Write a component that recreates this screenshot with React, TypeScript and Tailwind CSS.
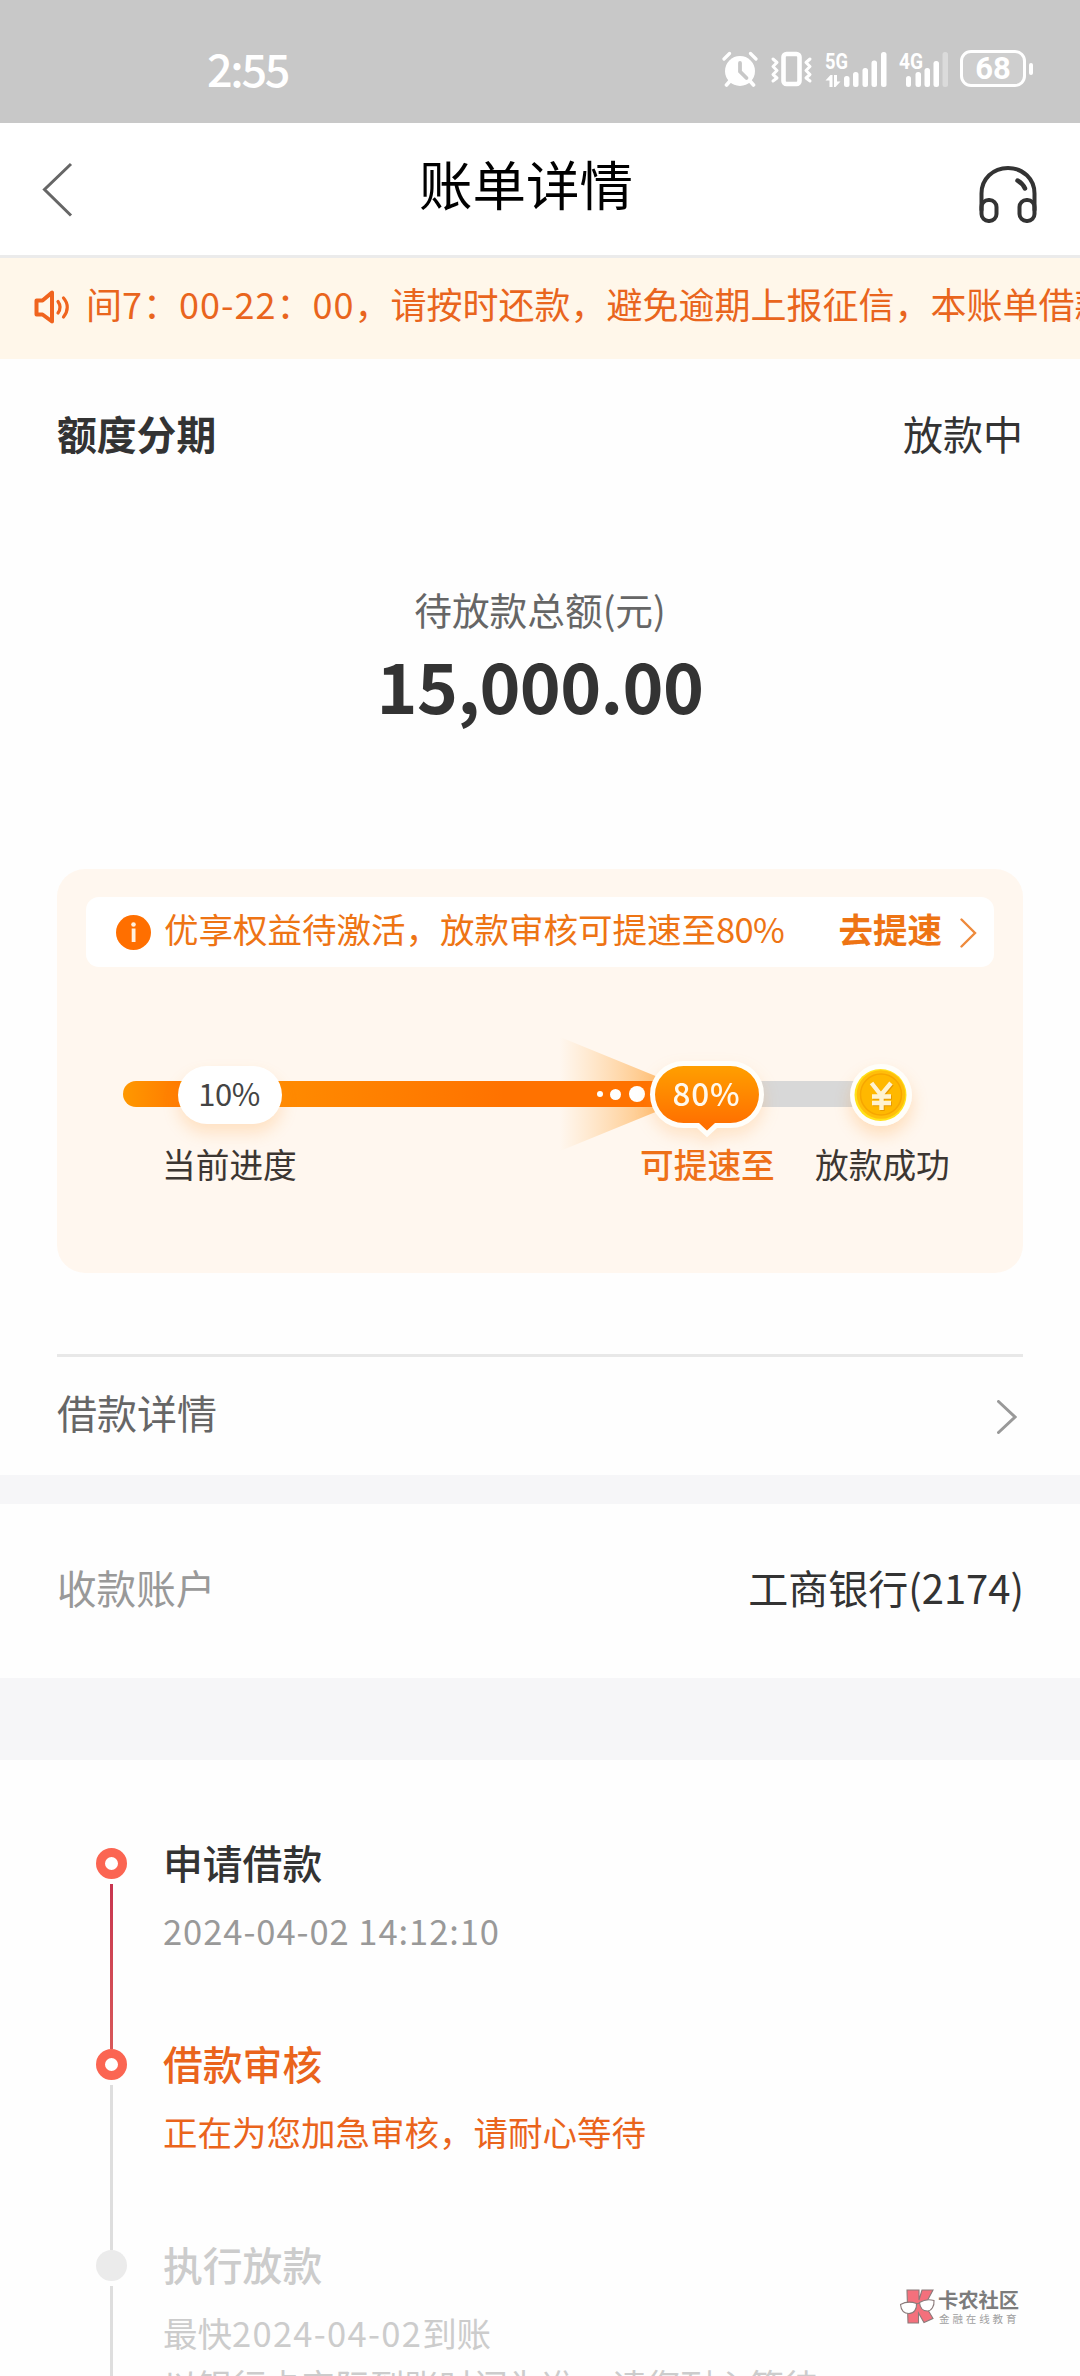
import React from "react";

function AlarmIcon() {
  return (
    <svg width="36" height="36" viewBox="0 0 36 36" fill="none" stroke="#fff" strokeLinecap="round">
      <circle cx="18" cy="20" r="15" fill="#fff" stroke="none" />
      <path d="M2 8L7.500 2.500M28.500 2.500L34 8" strokeWidth="3.200" />
      <path d="M8 30L4.500 34M28 30L31.500 34" strokeWidth="3.600" />
      <path d="M18 12V20.500L24.500 27" stroke="#c8c8c8" strokeWidth="3.800" />
    </svg>
  );
}

function VibrateIcon() {
  return (
    <svg width="44" height="36" viewBox="0 0 44 36" fill="none" stroke="#fff" strokeLinejoin="round" strokeLinecap="round">
      <rect x="13.500" y="3" width="16" height="30" rx="3" strokeWidth="4.600" />
      <path d="M3 8L7 11.500L3 15.500L7 19.500L3 23.500L7 27L3 30" strokeWidth="3" />
      <path d="M40 8L36 11.500L40 15.500L36 19.500L40 23.500L36 27L40 30" strokeWidth="3" />
    </svg>
  );
}

function SignalIcon({ label, weak }: { label: string; weak?: boolean }) {
  return weak ? (
    <svg width="52" height="38" viewBox="0 0 52 38" fill="#fff">
      <text x="0" y="17.500" fontFamily="Roboto" fontWeight="700" fontSize="22" textLength="24" lengthAdjust="spacingAndGlyphs">{label}</text>
      <rect x="7" y="25" width="5" height="11" rx="2.500" />
      <rect x="16.500" y="21" width="5.500" height="15" rx="2.500" />
      <rect x="25.500" y="17" width="5.500" height="19" rx="2.500" />
      <rect x="34.500" y="10" width="5.500" height="26" rx="2.500" />
      <rect x="43.500" y="1" width="5.500" height="35" rx="2.500" opacity="0.35" />
    </svg>
  ) : (
    <svg width="64" height="38" viewBox="0 0 64 38" fill="#fff">
      <text x="0" y="17.500" fontFamily="Roboto" fontWeight="700" fontSize="22" textLength="23" lengthAdjust="spacingAndGlyphs">{label}</text>
      <path d="M0.500 29.500L5.500 24H7.500V36H4.500V29.500ZM9 24H12V30.500H15.500L10.500 36H9Z" />
      <rect x="19" y="25" width="5.500" height="11" rx="2.500" />
      <rect x="28" y="21" width="5.500" height="15" rx="2.500" />
      <rect x="37.500" y="17" width="5.500" height="19" rx="2.500" />
      <rect x="46.500" y="9.500" width="5.500" height="26.500" rx="2.500" />
      <rect x="56" y="1" width="5.500" height="35" rx="2.500" />
    </svg>
  );
}

function StatusBar() {
  return (
    <div className="flex h-[123px] items-start bg-[#c8c8c8] text-white">
      <div className="mt-[38px] ml-[207px] flex-1 text-[45px] leading-[60px] font-medium tracking-[-2.3px]">2:55</div>
      <div className="mt-[51px] mr-[47px] flex items-start">
        <div className="mr-[12px]"><AlarmIcon /></div>
        <div className="mr-[11px]"><VibrateIcon /></div>
        <div className="mr-[10px]"><SignalIcon label="5G" /></div>
        <div className="mr-[9px]"><SignalIcon label="4G" weak /></div>
        <div className="-mt-px flex items-center gap-[3px]">
          <div className="flex h-[37px] w-[66px] items-center justify-center rounded-[11px] border-[3px] border-white bg-white/10 font-['Roboto'] text-[31px] leading-none font-bold">68</div>
          <div className="h-[12px] w-[4px] rounded-full bg-white" />
        </div>
      </div>
    </div>
  );
}

function HeadsetIcon() {
  return (
    <svg width="58" height="58" viewBox="0 0 58 58" fill="none" stroke="#333" strokeWidth="4" strokeLinecap="round">
      <path d="M2.500 45V28.500C2.500 14 14 3 29 3S55.500 14 55.500 28.500V45" />
      <rect x="2.500" y="35" width="15" height="21" rx="7" />
      <rect x="40.500" y="35" width="15" height="21" rx="7" />
      <path d="M38.500 15.500C42 17.500 44.500 20 46 23.500" strokeWidth="4.500" />
    </svg>
  );
}

function Chevron({ width, height, color, stroke }: { width: number; height: number; color: string; stroke: number }) {
  return (
    <svg width={width} height={height} viewBox={`0 0 ${width} ${height}`} fill="none" stroke={color} strokeWidth={stroke}>
      <path d={`M1.500 1.500L${width - 2} ${height / 2}L1.500 ${height - 1.5}`} strokeLinecap="round" />
    </svg>
  );
}

function TitleBar() {
  return (
    <div className="flex h-[135px] items-start justify-between border-b-[3px] border-[#ebebeb] bg-white">
      <svg className="mt-[39px] ml-[41px]" width="32" height="56" viewBox="0 0 32 56" fill="none" stroke="#666" strokeWidth="3">
        <path d="M30 2L3.500 27.500L30 53.500" />
      </svg>
      <div className="mt-[20px] text-[53.5px] leading-[80px] text-black">账单详情</div>
      <div className="mt-[42px] mr-[43px] -ml-[0px]"><HeadsetIcon /></div>
    </div>
  );
}

function Notice() {
  return (
    <div className="flex h-[101px] items-start overflow-hidden bg-[#fff7ea] whitespace-nowrap text-[#e9651d]">
      <svg className="mt-[31px] ml-[34px] shrink-0" width="36" height="36" viewBox="0 0 36 36" fill="none" stroke="#f0641e" strokeWidth="4" strokeLinejoin="round" strokeLinecap="round">
        <path d="M2.500 11.500H8.500L18 3.500V32.500L8.500 25.500H2.500Z" />
        <path d="M24 12.500C26.500 16 26.500 20.500 24 24M29.500 9C34.500 14.500 34.500 22 29.500 28" strokeWidth="3.200" />
      </svg>
      <div className="mt-[18px] ml-[16px] text-[36px] leading-[54px]">
        间<span className="tracking-[1px]">7</span>：<span className="tracking-[1px]">00-22</span>：<span className="tracking-[1px]">00</span>，请按时还款，避免逾期上报征信，本账单借款
      </div>
    </div>
  );
}

function Coin() {
  return (
    <svg width="62" height="62" viewBox="0 0 62 62">
      <circle cx="31" cy="31" r="31" fill="#fffefa" />
      <circle cx="30.500" cy="31" r="26" fill="#ffe11a" />
      <circle cx="31" cy="30.500" r="24.300" fill="#ffbe0a" />
      <circle cx="31" cy="30.500" r="20.500" fill="#ffb800" stroke="#f7a600" strokeWidth="1.500" />
      <g fill="none" strokeWidth="4.400">
        <path d="M21.500 19L31 31L41 19M31.500 30V46M22 32.500H41M22 39H41" transform="translate(1 1)" stroke="#e79a00" />
        <path d="M21.500 19L31 31L41 19M31.500 30V46M22 32.500H41M22 39H41" stroke="#fff3cf" />
      </g>
    </svg>
  );
}

function ProgressTrack() {
  return (
    <div className="relative ml-[66px] flex h-[26px] w-[758px]">
      <div className="w-[57px] rounded-l-full bg-linear-to-r from-[#ff9800] to-[#ff7a00]" />
      <div className="w-[48px] bg-[#ff9000]" />
      <div className="w-[460px] bg-linear-to-r from-[#ff9000] to-[#ff7200] to-60%" />
      <div className="flex-1 bg-[#d8d8d8]" />

      <svg className="absolute top-[-48px] left-[437px]" width="100" height="122" viewBox="0 0 100 122">
        <defs>
          <linearGradient id="beam" x1="0" x2="1" y1="0" y2="0">
            <stop offset="0" stopColor="#ffb458" stopOpacity="0" />
            <stop offset="1" stopColor="#ffa236" stopOpacity="0.65" />
          </linearGradient>
        </defs>
        <path d="M0 4L98 44V48H0ZM0 118L98 78V74H0Z" fill="url(#beam)" />
      </svg>
      <div className="absolute top-0 left-[474px] flex h-[26px] items-center">
        <div className="h-[6px] w-[6px] rounded-full bg-white" />
        <div className="ml-[7px] h-[11px] w-[11px] rounded-full bg-white" />
        <div className="ml-[8px] h-[16px] w-[16px] rounded-full bg-white" />
      </div>

      <div className="absolute top-[-15px] left-[55px] flex h-[58px] w-[104px] items-center justify-center rounded-[29px] bg-white pr-[2px] pb-[4px] text-[31px] leading-[40px] tracking-[-0.5px] text-[#444] shadow-[0_9px_16px_rgba(255,150,40,0.22)]">10%</div>

      <svg className="absolute top-[-21px] left-[526px] overflow-visible drop-shadow-[0_8px_8px_rgba(255,150,40,0.2)]" width="116" height="80" viewBox="0 0 116 80">
        <defs>
          <linearGradient id="bubble" x1="0" x2="0" y1="0" y2="1">
            <stop offset="0" stopColor="#ff9f00" />
            <stop offset="0.9" stopColor="#ff7000" />
          </linearGradient>
        </defs>
        <path d="M34.500 6H81.500A28.500 28.500 0 0 1 81.500 63H66L58 70.500L50 63H34.500A28.500 28.500 0 0 1 34.500 6Z" stroke="#fffefa" strokeWidth="10" fill="#fffefa" />
        <path d="M34.500 6H81.500A28.500 28.500 0 0 1 81.500 63H66L58 70.500L50 63H34.500A28.500 28.500 0 0 1 34.500 6Z" fill="url(#bubble)" />
        <text x="57" y="45.500" textAnchor="middle" fontFamily="Noto Sans CJK SC" fontWeight="500" fontSize="31.500" fill="#fff8ec" textLength="67">80%</text>
      </svg>

      <div className="absolute top-[-17px] left-[727px] rounded-full shadow-[0_9px_16px_rgba(255,150,40,0.25)]"><Coin /></div>
    </div>
  );
}

function SpeedCard() {
  return (
    <div className="mx-[57px] mt-[135px] h-[404px] rounded-[28px] bg-[#fff7ef] pt-[28px]">
      <div className="mx-[29px] flex h-[70px] items-start rounded-[13px] bg-white text-[34.5px] leading-[50px] text-[#ee7414]">
        <svg className="mt-[18px] ml-[30px]" width="35" height="35" viewBox="0 0 35 35">
          <circle cx="17.500" cy="17.500" r="17.500" fill="#ff6f00" />
          <circle cx="17.500" cy="9.500" r="2.300" fill="#fff1e0" />
          <rect x="15.700" y="13.500" width="3.800" height="13.500" fill="#fff1e0" />
        </svg>
        <div className="mt-[6px] ml-[13px] whitespace-nowrap">优享权益待激活，放款审核可提速至<span className="tracking-[-0.7px]">80%</span></div>
        <div className="mt-[6px] mr-[18px] ml-auto font-bold">去提速</div>
        <div className="mt-[21px] mr-[17px]"><Chevron width={17} height={30} color="#ee8a3c" stroke={2.4} /></div>
      </div>
      <div className="mt-[114px]"><ProgressTrack /></div>
      <div className="mt-[32px] flex text-[33.7px] leading-[50px] whitespace-nowrap text-[#3c3632]">
        <div className="ml-[105px] w-[478px]">当前进度</div>
        <div className="w-[175px] font-medium text-[#ee7018]">可提速至</div>
        <div>放款成功</div>
      </div>
    </div>
  );
}

function StepMarker({ active }: { active: boolean }) {
  return active ? (
    <div className="h-[31px] w-[31px] rounded-full border-[9px] border-[#fb6552] bg-white" />
  ) : (
    <div className="h-[31px] w-[31px] rounded-full bg-[#ebebeb]" />
  );
}

interface StepProps {
  active: boolean;
  line: string;
  title: string;
  titleClass: string;
  noteClass: string;
  children: React.ReactNode;
}

function Step({ active, line, title, titleClass, noteClass, children }: StepProps) {
  return (
    <div className="flex h-[201px]">
      <div className="flex flex-col items-center">
        <StepMarker active={active} />
        <div className={`mt-[5px] w-[3px] flex-1 ${line}`} />
      </div>
      <div className="-mt-[17px] ml-[36px] whitespace-nowrap">
        <div className={`text-[39.8px] leading-[62px] font-medium ${titleClass}`}>{title}</div>
        <div className={`mt-[11px] text-[34.5px] leading-[52px] ${noteClass}`}>{children}</div>
      </div>
    </div>
  );
}

function Watermark() {
  return (
    <div className="absolute top-[2287px] left-[899px] flex">
      <svg width="36" height="38" viewBox="0 0 36 38" stroke="#8a7a7a" strokeWidth="1.100">
        <path d="M8 3H20V13L23 3H34L26 18L34 31.500L25 35.500L19.500 26V36H9Z" fill="#f4707c" />
        <path d="M1.500 17.500C6 15 12 14.500 17.500 16.500C18 22 15 26.500 10 26.500C5 26.500 2 23 1.500 17.500Z" fill="#fff" />
        <path d="M20.500 15.500C24.500 13 29.500 12 35 13.500C35.500 19 32.500 24 28.500 24C24 24 21 21 20.500 15.500Z" fill="#fff" />
        <path d="M17.500 17L20.500 16" fill="none" />
      </svg>
      <div className="ml-[3px]">
        <div className="text-[20.3px] leading-[25px] font-bold whitespace-nowrap text-[#7c7c7c]">卡农社区</div>
        <div className="ml-px text-[10.5px] leading-[13px] tracking-[2.9px] whitespace-nowrap text-[#a0a0a0]">金融在线教育</div>
      </div>
    </div>
  );
}

export default function App() {
  return (
    <div className="relative h-[2376px] w-[1080px] overflow-hidden bg-[#fefefe] font-['Noto_Sans_CJK_SC',sans-serif] text-[#333]">
      <StatusBar />
      <TitleBar />
      <Notice />

      <div className="h-[1116px]">
        <div className="flex justify-between px-[57px] pt-[44px] text-[40px] leading-[60px]">
          <div className="text-[39.8px] font-bold">额度分期</div>
          <div>放款中</div>
        </div>
        <div className="mt-[118px] text-center text-[37.7px] leading-[56px] text-[#666]">待放款总额(元)</div>
        <div className="-mt-[3px] text-center text-[69.5px] leading-[100px] font-bold tracking-[-0.6px]">15,000.00</div>
        <SpeedCard />
        <div className="mx-[57px] mt-[81px] flex items-start justify-between border-t-[3px] border-[#e8e8e8] pt-[25px] text-[40px] leading-[60px] text-[#666]">
          <div>借款详情</div>
          <div className="mt-[18px] mr-[6px]"><Chevron width={20} height={34} color="#999" stroke={3} /></div>
        </div>
      </div>

      <div className="h-[29px] bg-[#f6f6f8]" />
      <div className="flex h-[174px] justify-between px-[57px] pt-[53px] text-[40px] leading-[60px]">
        <div className="text-[39.6px] text-[#999]">收款账户</div>
        <div className="-mr-px">工商银行(2174)</div>
      </div>
      <div className="h-[82px] bg-[#f6f6f8]" />

      <div className="pt-[88px] pl-[96px]">
        <Step active line="bg-linear-to-b from-[#c8354f] to-[#d8585a]" title="申请借款" titleClass="text-[#333]" noteClass="text-[#999]">
          <span className="tracking-[0.95px]">2024-04-02 14:12:10</span>
        </Step>
        <Step active line="bg-[#dedede]" title="借款审核" titleClass="text-[#ea641c]" noteClass="text-[#ea641c]">
          正在为您加急审核，请耐心等待
        </Step>
        <Step active={false} line="bg-[#dedede]" title="执行放款" titleClass="text-[#ccc]" noteClass="text-[#ccc]">
          最快<span className="tracking-[1.3px]">2024-04-02</span>到账
          <br />
          以银行卡实际到账时间为准，请您耐心等待
        </Step>
      </div>
      <Watermark />
    </div>
  );
}
